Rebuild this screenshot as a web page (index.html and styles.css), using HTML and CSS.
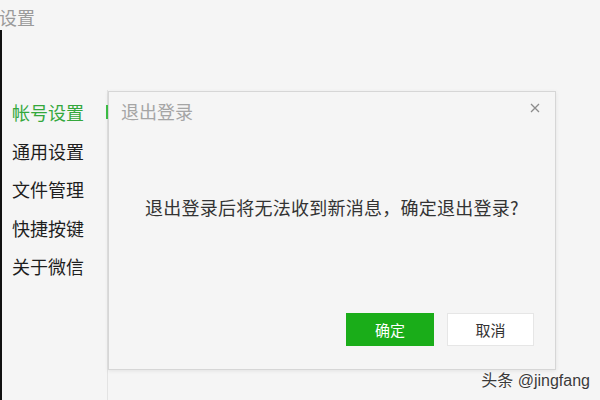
FILE: index.html
```html
<!DOCTYPE html>
<html lang="zh">
<head>
<meta charset="utf-8">
<title>设置</title>
<link rel="stylesheet" href="styles.css">
</head>
<body>
<div class="app">
  <div class="header">设置</div>
  <div class="main">
    <nav class="sidebar">
      <div class="item active"><span>帐号设置</span><span class="bar"></span></div>
      <div class="item"><span>通用设置</span></div>
      <div class="item"><span>文件管理</span></div>
      <div class="item"><span>快捷按键</span></div>
      <div class="item"><span>关于微信</span></div>
    </nav>
    <div class="content"></div>
  </div>

  <div class="dialog">
    <div class="dialog-head">
      <span class="dialog-title">退出登录</span>
      <svg class="close" width="10" height="10" viewBox="0 0 10 10"><path d="M1 1L9 9M9 1L1 9" stroke="#8c8c8c" stroke-width="1.3" fill="none"/></svg>
    </div>
    <div class="dialog-msg">退出登录后将无法收到新消息，确定退出登录?</div>
    <div class="dialog-foot">
      <button class="btn primary">确定</button>
      <button class="btn">取消</button>
    </div>
  </div>

  <div class="watermark">头条 @jingfang</div>
</div>
</body>
</html>
```

FILE: styles.css
```css
html, body {
  margin: 0;
  padding: 0;
}
body {
  background: #f5f5f5;
  font-family: "Noto Sans CJK SC", "Noto Sans", sans-serif;
  width: 600px;
  height: 400px;
  overflow: hidden;
}
.app {
  position: relative;
  width: 600px;
  height: 400px;
  display: flex;
  flex-direction: column;
}
.header {
  height: 30px;
  box-sizing: border-box;
  padding-top: 8px;
  margin-left: -1px;
  font-size: 18px;
  line-height: 18px;
  color: #9a9a9a;
}
.main {
  flex: 1;
  display: flex;
  border-left: 2px solid #111;
}
.sidebar {
  width: 105px;
  border-right: 1px solid #e3e3e3;
  margin-top: 60px;
  padding-top: 3px;
}
.item {
  display: flex;
  justify-content: space-between;
  align-items: center;
  height: 38.5px;
  padding-left: 10px;
  font-size: 18px;
  line-height: 18px;
  color: #1e1e1e;
}
.item.active {
  color: #34a83c;
}
.bar {
  width: 2px;
  height: 14px;
  background: #3cbf46;
  margin-right: -1px;
}
.content {
  flex: 1;
}
.dialog {
  position: absolute;
  left: 108px;
  top: 91px;
  width: 446px;
  height: 277px;
  border: 1px solid #d6d6d6;
  background: #f5f5f5;
  box-shadow: 0 1px 4px rgba(0, 0, 0, 0.08);
  display: flex;
  flex-direction: column;
}
.dialog-head {
  display: flex;
  justify-content: space-between;
  align-items: flex-start;
  padding: 10px 15px 0 12px;
  height: 18px;
}
.dialog-title {
  font-size: 18px;
  line-height: 18px;
  color: #a5a5a5;
}
.close {
  margin-top: 1px;
}
.dialog-msg {
  margin-top: 78px;
  text-align: center;
  font-size: 18px;
  line-height: 18px;
  letter-spacing: 0.25px;
  color: #333;
}
.dialog-foot {
  margin-top: auto;
  display: flex;
  justify-content: flex-end;
  gap: 13px;
  padding: 0 21px 23px 0;
}
.btn {
  font-family: "Noto Sans CJK SC", sans-serif;
  width: 87px;
  height: 33px;
  font-size: 15px;
  border: 1px solid #e6e6e6;
  background: #fff;
  color: #333;
  padding: 0;
}
.btn.primary {
  width: 88px;
  background: #1aad19;
  border-color: #1aad19;
  color: #fff;
}
.watermark {
  position: absolute;
  right: 10px;
  bottom: 10px;
  font-family: "Liberation Sans", "Noto Sans CJK SC", sans-serif;
  font-size: 16px;
  line-height: 18px;
  color: #3a3a3a;
  text-shadow: 0 0 2px #fff;
}
```
